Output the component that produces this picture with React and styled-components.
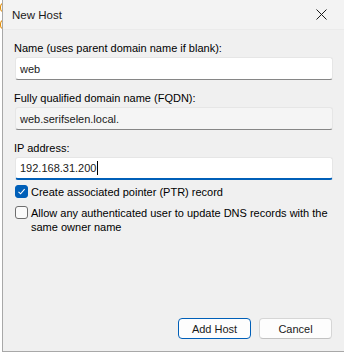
import React, { useState } from 'react';
import styled, { createGlobalStyle } from 'styled-components';

const GlobalStyle = createGlobalStyle`
  html, body {
    margin: 0;
    padding: 0;
    background: #ffffff;
  }
  body {
    font-family: "Segoe UI", "Liberation Sans", Arial, sans-serif;
    font-size: 11px;
    color: #000;
  }
`;

const Page = styled.div`
  display: flex;
  width: 344px;
  height: 356px;
  overflow: hidden;
`;

const Behind = styled.div`
  width: 2px;
  overflow: hidden;
  display: flex;
  flex-direction: column;
  padding-top: 3px;
  gap: 8px;
`;

const Arc = styled.span`
  display: block;
  width: 6px;
  height: 9px;
  box-sizing: border-box;
  border: 1.5px solid #e08a00;
  border-radius: 50%;
`;

const Dialog = styled.div`
  width: 341px;
  height: 351px;
  background: #f0f0f0;
  border-left: 1px solid #a8a8a8;
  border-bottom: 1px solid #a8a8a8;
  display: flex;
  flex-direction: column;
`;

const TitleBar = styled.div`
  height: 30px;
  flex: none;
  display: flex;
  align-items: center;
  justify-content: space-between;
  padding: 0 0 0 9px;
  background: #f3f3f3;
  border-bottom: 1px solid #ebebeb;
  box-sizing: border-box;
`;

const Title = styled.span`
  font-size: 11.5px;
  color: #1a1a1a;
`;

const CloseButton = styled.button`
  width: 46px;
  height: 30px;
  border: 0;
  background: transparent;
  display: flex;
  align-items: center;
  justify-content: center;
  padding: 0;
`;

const Body = styled.div`
  flex: 1;
  display: flex;
  flex-direction: column;
  padding: 10px 11px 12px 11px;
`;

const Fields = styled.div`
  display: flex;
  flex-direction: column;
  gap: 10px;
`;

const Field = styled.div`
  display: flex;
  flex-direction: column;
`;

const Label = styled.label`
  line-height: 16px;
  margin-bottom: 1px;
  color: #000;
  white-space: nowrap;
`;

const Input = styled.div`
  height: 23px;
  margin-left: 1px;
  box-sizing: border-box;
  display: flex;
  align-items: center;
  padding: 0 0 0 4px;
  border: 1px solid #e6e6e6;
  border-bottom: ${p => (p.focused ? '2px solid #005fb8' : '1px solid #868686')};
  border-radius: 3px;
  background: ${p => (p.readOnly ? '#f5f5f5' : '#ffffff')};
  color: #1a1a1a;
  white-space: nowrap;
`;

const Caret = styled.span`
  display: inline-block;
  width: 1px;
  height: 14px;
  background: #000;
  margin-left: 1px;
`;

const Checks = styled.div`
  display: flex;
  flex-direction: column;
  gap: 7px;
  margin-top: 5px;
  margin-left: 1px;
`;

const CheckRow = styled.div`
  display: flex;
  align-items: flex-start;
  gap: 3px;
`;

const Box = styled.span`
  flex: none;
  width: 13px;
  height: 13px;
  box-sizing: border-box;
  border-radius: 3px;
  display: flex;
  align-items: center;
  justify-content: center;
  background: ${p => (p.checked ? '#005fb8' : '#fafafa')};
  border: 1px solid ${p => (p.checked ? '#005fb8' : '#6e6e6e')};
`;

const CheckText = styled.span`
  line-height: 14px;
  white-space: nowrap;
`;

const Spacer = styled.div`
  flex: 1;
`;

const Buttons = styled.div`
  display: flex;
  justify-content: flex-end;
  gap: 8px;
  margin-right: 1px;
`;

const Button = styled.button`
  width: 73px;
  height: 21px;
  box-sizing: border-box;
  font: inherit;
  font-size: 11px;
  color: #1a1a1a;
  background: #fdfdfd;
  border-radius: 4px;
  padding: 0;
  border: 1px solid ${p => (p.primary ? '#005fb8' : '#d6d6d6')};
  border-bottom-color: ${p => (p.primary ? '#005fb8' : '#c2c2c2')};
`;

const Check = () => (
  <svg width="9" height="9" viewBox="0 0 9 9">
    <path d="M1.5 4.8 L3.6 6.8 L7.6 2.2" fill="none" stroke="#fff" strokeWidth="1.1" />
  </svg>
);

const App = () => {
  const [ptr, setPtr] = useState(true);
  const [allow, setAllow] = useState(false);

  return (
    <Page>
      <GlobalStyle />
      <Behind>
        <Arc />
        <Arc />
      </Behind>
      <Dialog>
        <TitleBar>
          <Title>New Host</Title>
          <CloseButton type="button" aria-label="Close">
            <svg width="11" height="11" viewBox="0 0 11 11">
              <path d="M0.5 0.5 L10.5 10.5 M10.5 0.5 L0.5 10.5" stroke="#1a1a1a" strokeWidth="1" />
            </svg>
          </CloseButton>
        </TitleBar>
        <Body>
          <Fields>
            <Field>
              <Label>Name (uses parent domain name if blank):</Label>
              <Input>web</Input>
            </Field>
            <Field>
              <Label>Fully qualified domain name (FQDN):</Label>
              <Input readOnly>web.serifselen.local.</Input>
            </Field>
            <Field>
              <Label>IP address:</Label>
              <Input focused>
                <span>192.168.31.200</span>
                <Caret />
              </Input>
            </Field>
          </Fields>
          <Checks>
            <CheckRow onClick={() => setPtr(!ptr)}>
              <Box checked={ptr}>{ptr && <Check />}</Box>
              <CheckText>Create associated pointer (PTR) record</CheckText>
            </CheckRow>
            <CheckRow onClick={() => setAllow(!allow)}>
              <Box checked={allow}>{allow && <Check />}</Box>
              <CheckText>
                Allow any authenticated user to update DNS records with the
                <br />
                same owner name
              </CheckText>
            </CheckRow>
          </Checks>
          <Spacer />
          <Buttons>
            <Button type="button" primary>
              Add Host
            </Button>
            <Button type="button">Cancel</Button>
          </Buttons>
        </Body>
      </Dialog>
    </Page>
  );
};

export default App;
